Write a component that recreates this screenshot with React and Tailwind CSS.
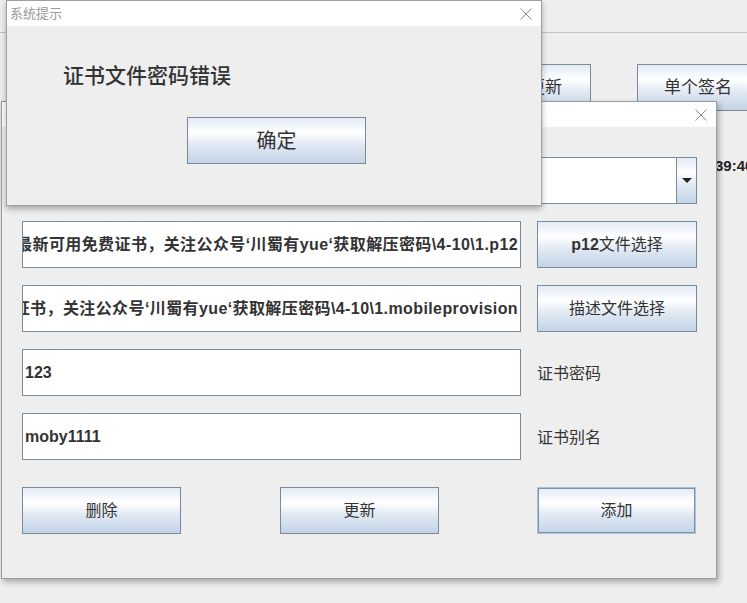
import React from "react";

const F = "font-['Liberation_Sans','Noto_Sans_CJK_SC',sans-serif]";
const BTN =
  "flex shrink-0 items-center justify-center border border-[#7a8a99] bg-[linear-gradient(to_bottom,#e3ebf6_0%,#ffffff_33%,#e2eaf4_58%,#c3d4e7_100%)] text-[16px] text-[#333333]";

function CloseX() {
  return (
    <svg width="12" height="12" viewBox="0 0 12 12">
      <path d="M0.5 0.5 L11.5 11.5 M11.5 0.5 L0.5 11.5" stroke="#8c8c8c" strokeWidth="1" fill="none" />
    </svg>
  );
}

function Field({ children }) {
  return (
    <div className="flex h-[47px] w-[499px] shrink-0 items-center justify-end overflow-hidden border border-[#7a8a99] bg-white pr-[2px]">
      <span className="whitespace-nowrap text-[16px] font-bold tracking-[0.4px] text-[#333333]">{children}</span>
    </div>
  );
}

function LeftField({ children }) {
  return (
    <div className="flex h-[47px] w-[499px] shrink-0 items-center overflow-hidden border border-[#7a8a99] bg-white pl-[2px]">
      <span className="whitespace-nowrap text-[16px] font-bold text-[#333333]">{children}</span>
    </div>
  );
}

export default function App() {
  return (
    <div className={`relative h-[603px] w-[747px] overflow-hidden bg-[#eeeeee] ${F}`}>
      {/* main background window */}
      <div className="absolute inset-0 flex flex-col">
        <div className="h-[33px] border-b border-[#c4c4c4]" />
        <div className="flex gap-[46px] pl-[499px] pt-[31px]">
          <div className={`${BTN} h-[47px] w-[92px] text-[17px]`}>更新</div>
          <div className={`${BTN} h-[47px] w-[122px] text-[17px]`}>单个签名</div>
        </div>
        <div className="flex pl-[715px] pt-[45px]">
          <span className="whitespace-nowrap text-[15px] font-bold leading-[20px] text-[#222222]">39:40</span>
        </div>
      </div>

      {/* middle dialog */}
      <div className="absolute left-[1px] top-[101px] flex h-[478px] w-[716px] flex-col border border-[#9c9c9c] bg-[#eeeeee] shadow-[2px_3px_6px_rgba(0,0,0,0.3)]">
        <div className="flex h-[25px] items-center justify-between bg-white pl-[3px] pr-[9px]">
          <span className="text-[13px] text-[#999999]">证书管理</span>
          <CloseX />
        </div>
        <div className="flex flex-col gap-[17px] pl-[20px] pt-[30px]">
          <div className="flex h-[47px] w-[675px] border border-[#7a8a99] bg-white">
            <div className="flex-1" />
            <div className="flex w-[20px] items-center justify-center border-l border-[#7a8a99] bg-[linear-gradient(to_bottom,#e3ebf6_0%,#ffffff_33%,#e2eaf4_58%,#c3d4e7_100%)]">
              <svg width="10" height="5" viewBox="0 0 10 5">
                <path d="M0 0 L10 0 L5 5 Z" fill="#222222" />
              </svg>
            </div>
          </div>
          <div className="flex gap-[16px]">
            <Field>D:\最新可用免费证书，关注公众号‘川蜀有yue‘获取解压密码\4-10\1.p12</Field>
            <div className={`${BTN} h-[47px] w-[160px]`}>
              <span className="font-bold">p12</span>文件选择
            </div>
          </div>
          <div className="flex gap-[16px]">
            <Field>D:\最新可用免费证书，关注公众号‘川蜀有yue‘获取解压密码\4-10\1.mobileprovision</Field>
            <div className={`${BTN} h-[47px] w-[160px]`}>描述文件选择</div>
          </div>
          <div className="flex items-center gap-[16px]">
            <LeftField>123</LeftField>
            <span className="pt-[2px] text-[16px] text-[#333333]">证书密码</span>
          </div>
          <div className="flex items-center gap-[16px]">
            <LeftField>moby1111</LeftField>
            <span className="pt-[2px] text-[16px] text-[#333333]">证书别名</span>
          </div>
          <div className="mt-[10px] flex">
            <div className={`${BTN} h-[47px] w-[159px]`}>删除</div>
            <div className={`${BTN} ml-[99px] h-[47px] w-[159px]`}>更新</div>
            <div className={`${BTN} ml-[98px] h-[47px] w-[159px] border-[#a9c1da] shadow-[inset_0_0_0_1px_#7f93a8]`}>添加</div>
          </div>
        </div>
      </div>

      {/* message dialog */}
      <div className="absolute left-[6px] top-0 flex h-[206px] w-[536px] flex-col border border-[#a0a0a0] bg-[#eeeeee] shadow-[0_3px_6px_rgba(0,0,0,0.3)]">
        <div className="flex h-[25px] items-center justify-between bg-white pl-[3px] pr-[9px]">
          <span className="text-[13px] text-[#9a9a9a]">系统提示</span>
          <CloseX />
        </div>
        <div className="pl-[56px] pt-[37px]">
          <span className="text-[21px] font-medium leading-[26px] text-[#333333]">证书文件密码错误</span>
        </div>
        <div className="pl-[180px] pt-[27px]">
          <div className={`${BTN} h-[47px] w-[179px] text-[20px]`}>确定</div>
        </div>
      </div>
    </div>
  );
}
